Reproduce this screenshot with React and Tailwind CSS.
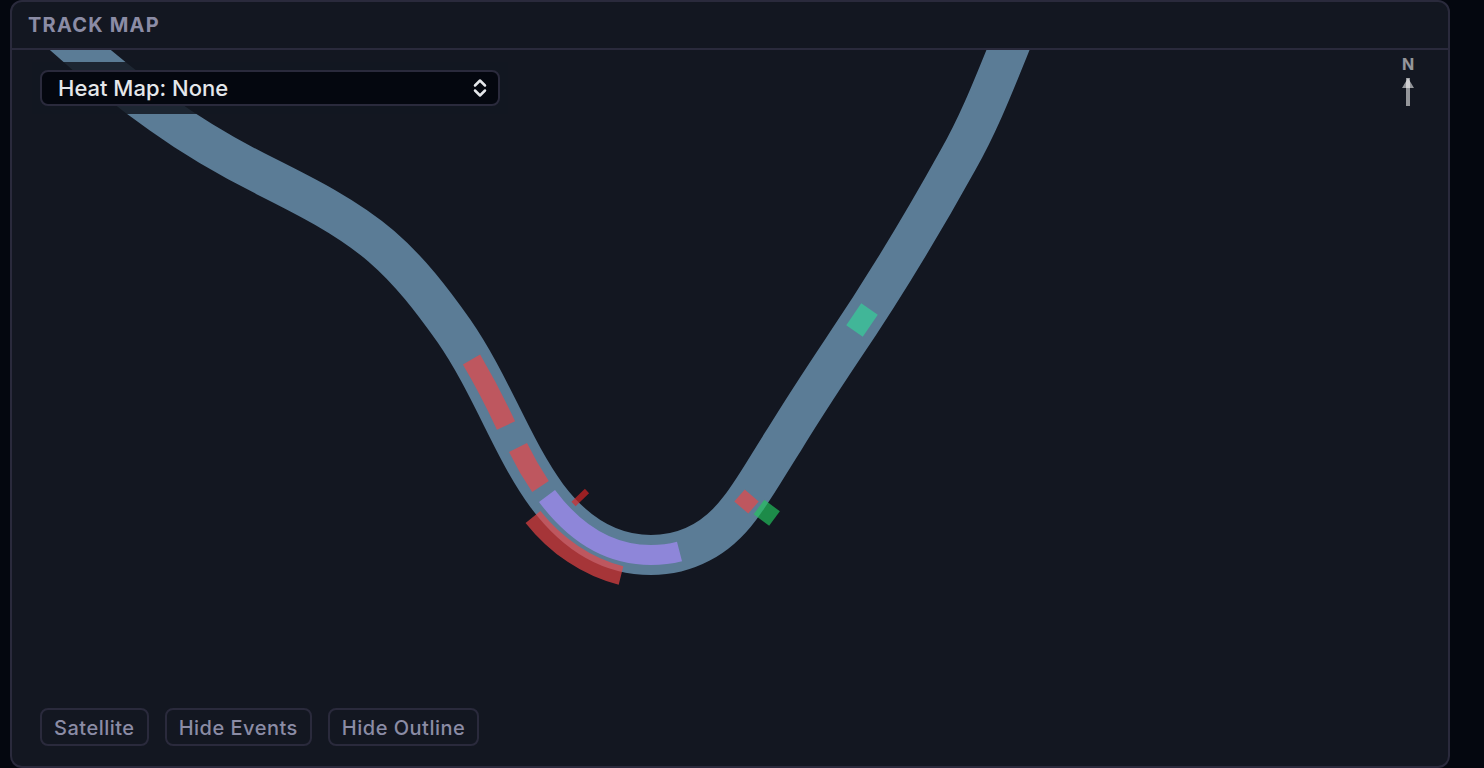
import { useState } from "react"

const TRACK = [
  "M62 34",
  "C93 62 127 90 161 114",
  "C193 137 229 158 265 176",
  "C305 196 347 217 381 246",
  "C410 271 432 300 454 331",
  "C472 357 486 385 500 413",
  "C514 441 528 470 547 496",
  "C574 532 608 555 651 555",
  "C686 555 717 539 740 508",
  "C756 487 769 463 784 440",
  "C803 409 822 380 842 350",
  "C884 288 922 225 958 160",
  "C978 125 993 87 1008 50",
  "L1016 30",
].join("")

const EVENTS = [
  { id: "brake-1", d: "M471.5 359.5Q490 391 506 425.5", width: 20, color: "#ef4444" },
  { id: "brake-2", d: "M518 447.5Q528 468 540.5 486.5", width: 20, color: "#ef4444" },
  { id: "corner", d: "M547 496C574 532 608 555 651 555Q666 555 679.5 551.5", width: 20, color: "#a78bfa" },
  { id: "slide", d: "M533 517C556 546 587 567 621 575.5", width: 19, color: "#ef4444" },
  { id: "shift", d: "M573.5 504L587 491", width: 6, color: "#dc2626" },
  { id: "brake-3", d: "M739.5 495.5L753.5 507.5", width: 16, color: "#ef4444" },
  { id: "throttle", d: "M759 507L774.5 518.5", width: 18, color: "#22c55e" },
  { id: "full-throttle", d: "M869.5 309L854.5 331", width: 20, color: "#34d399" },
]

function MapButton({ onClick, children }) {
  return (
    <button
      type="button"
      onClick={onClick}
      className="h-[38px] px-3 pt-0.5 rounded-lg border-2 border-[#2a2a3c] text-[20px] leading-6 font-medium tracking-[0.5px] text-[#8b8ca5] hover:text-white transition"
    >
      {children}
    </button>
  )
}

function Compass() {
  return (
    <div className="absolute top-1 right-7 w-6 flex flex-col items-center">
      <span className="text-[16px] leading-5 font-bold text-white/55">N</span>
      <svg viewBox="0 0 24 32" className="w-6 h-8">
        <path d="M12 4V32" stroke="#fff" strokeOpacity="0.55" strokeWidth="4" />
        <path d="M12 4L18 14H6Z" fill="#fff" fillOpacity="0.55" />
      </svg>
    </div>
  )
}

export default function App() {
  const [heatMap, setHeatMap] = useState("none")
  const [satellite, setSatellite] = useState(false)
  const [showEvents, setShowEvents] = useState(true)
  const [showOutline, setShowOutline] = useState(true)

  return (
    <div className="h-screen bg-[#04070f] pl-[10px] pr-[34px] font-['Inter',sans-serif]">
      <section className="h-full flex flex-col rounded-xl border-2 border-[#2a2a3c] bg-[#131721] overflow-hidden">
        <header className="h-12 shrink-0 flex items-center px-4 border-b-2 border-[#2a2a3c]">
          <h2 className="text-[20px] leading-6 font-bold tracking-[1.2px] text-[#8b8ca5]">TRACK MAP</h2>
        </header>

        <div className="relative flex-1 min-h-0">
          {/* Track and events */}
          <svg
            viewBox="12 50 1436 716"
            preserveAspectRatio="xMidYMid slice"
            className="block w-full h-full"
            role="img"
            aria-label="Track map"
          >
            {showOutline && <path d={TRACK} fill="none" stroke="#5b7c96" strokeWidth="40" />}
            {showEvents &&
              EVENTS.map((ev) => (
                <path key={ev.id} d={ev.d} fill="none" stroke={ev.color} strokeWidth={ev.width} strokeOpacity="0.67" />
              ))}
          </svg>

          {/* Heat map picker */}
          <div className="absolute top-3 left-5 w-[476px] p-2 bg-[#131721]/85">
            <div className="relative">
              <select
                aria-label="Heat map"
                value={heatMap}
                onChange={(e) => setHeatMap(e.target.value)}
                className="block w-full h-9 pl-4 pr-10 appearance-none rounded-lg border-2 border-[#2a2a3c] bg-[#04070f] text-[22px] leading-7 font-medium text-[#e5e7eb]"
              >
                <option value="none">Heat Map: None</option>
                <option value="speed">Heat Map: Speed</option>
                <option value="brake">Heat Map: Brake</option>
                <option value="throttle">Heat Map: Throttle</option>
              </select>
              <svg viewBox="0 0 16 20" className="absolute top-2 right-3 w-4 h-5 pointer-events-none">
                <path
                  d="M3 7.5L8 2.5L13 7.5M3 12.5L8 17.5L13 12.5"
                  fill="none"
                  stroke="#e5e7eb"
                  strokeWidth="2.5"
                  strokeLinecap="round"
                  strokeLinejoin="round"
                />
              </svg>
            </div>
          </div>

          <Compass />

          <div className="absolute bottom-5 left-7 flex gap-4">
            <MapButton onClick={() => setSatellite(!satellite)}>{satellite ? "Map" : "Satellite"}</MapButton>
            <MapButton onClick={() => setShowEvents(!showEvents)}>{showEvents ? "Hide Events" : "Show Events"}</MapButton>
            <MapButton onClick={() => setShowOutline(!showOutline)}>{showOutline ? "Hide Outline" : "Show Outline"}</MapButton>
          </div>
        </div>
      </section>
    </div>
  )
}
